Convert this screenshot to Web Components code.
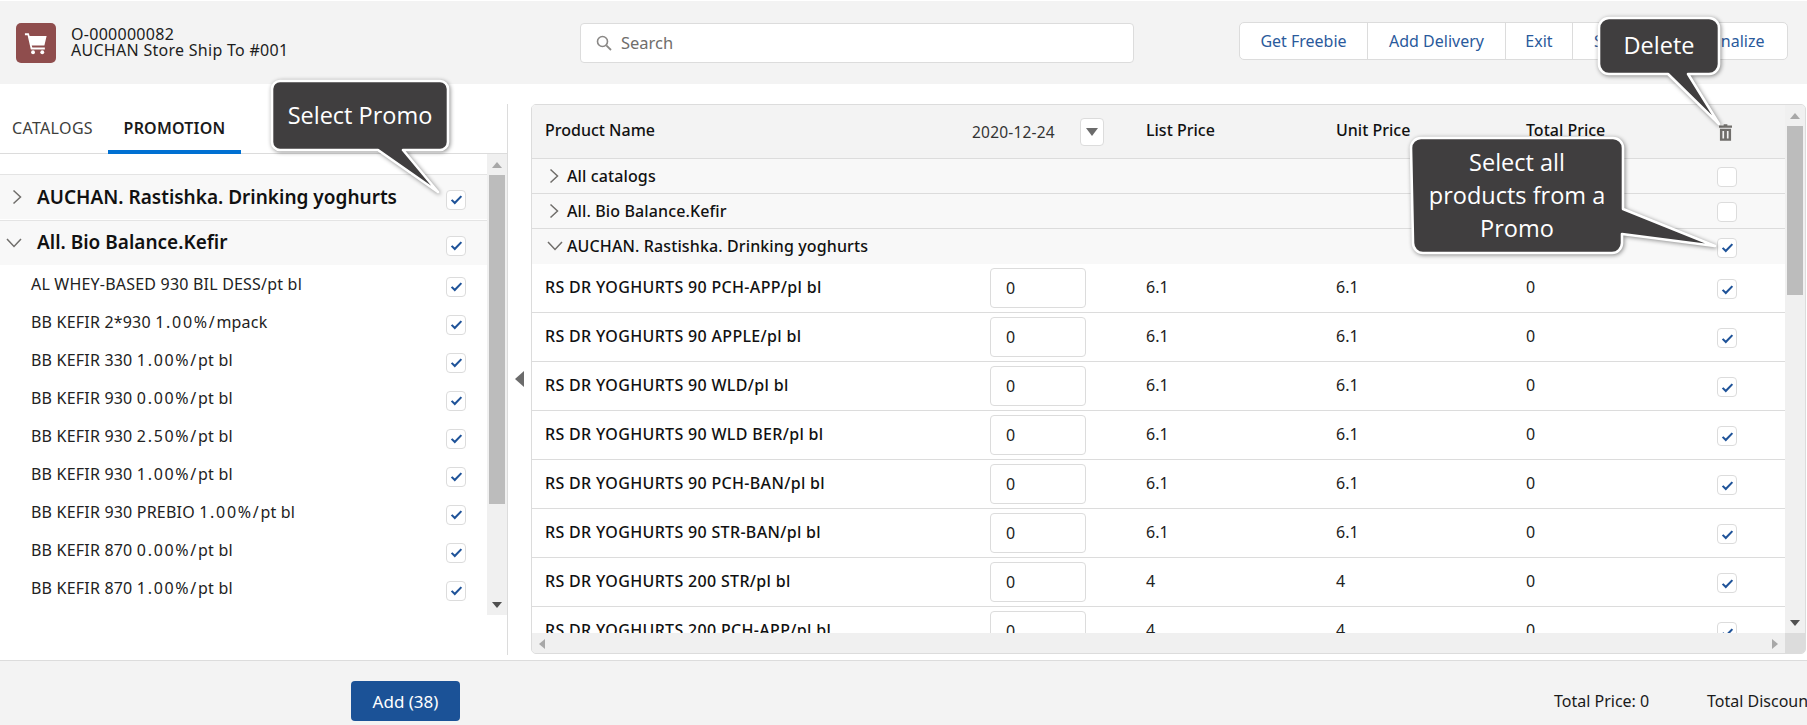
<!DOCTYPE html>
<html lang="en"><head><meta charset="utf-8"><title>Order</title>
<style>
html,body{margin:0;padding:0;background:#fff;overflow:hidden}
body{width:1807px;height:725px;font-family:"Noto Sans",sans-serif;color:#1a1a1a}
</style></head><body>
<order-app></order-app>
<script>
const def=(name,css,html,init)=>customElements.define(name,class extends HTMLElement{
  connectedCallback(){ if(this.shadowRoot) return; const r=this.attachShadow({mode:'open'});
    r.innerHTML=`<style>${css}</style>`+(typeof html==='function'?html(this):html); if(init) init(this,r);}
});
const CHECK=`<svg viewBox="0 0 20 20" width="15" height="15"><path d="M3.5 10.5l4.2 4.2L16.5 5.5" fill="none" stroke="#1f5399" stroke-width="2.8"/></svg>`;
const CHEV_R=`<svg width="11" height="16" viewBox="0 0 11 16"><path d="M1.5 1.5l7 6.5-7 6.5" fill="none" stroke="#706e6b" stroke-width="1.5"/></svg>`;
const CHEV_D=`<svg width="16" height="10" viewBox="0 0 16 10"><path d="M1 1l7 7.5L15 1" fill="none" stroke="#706e6b" stroke-width="1.5"/></svg>`;

def('x-check',`:host{display:inline-flex;box-sizing:border-box;width:20px;height:20px;background:#fff;border:1px solid #dcdcdc;border-radius:4px;align-items:center;justify-content:center}`,
  el=>el.hasAttribute('on')?CHECK:'');

def('fake-vbar',`:host{display:flex;flex-direction:column;align-items:center;background:#f0f0f0;box-sizing:border-box;width:20px}
 .t{height:21px;flex:none;display:flex;align-items:center;justify-content:center}
 .thumb{background:#bcbcbc;width:16px;flex:none}
 .sp{flex:1}
 .a{width:0;height:0;border:5px solid transparent;border-top:0;border-bottom:6px solid #a8a8a8}
 .b{width:0;height:0;border:5px solid transparent;border-bottom:0;border-top:6px solid #505050}`,
 el=>`<div class="t"><i class="a"></i></div><div class="thumb" style="height:${el.getAttribute('thumb')}px"></div><div class="sp"></div><div class="t"><i class="b"></i></div>`);

def('app-header',`:host{display:flex;box-sizing:border-box;height:83px;background:#f3f3f3;padding:22px 0 0 16px;align-items:flex-start}
 .logo{width:40px;height:40px;border-radius:5px;background:#8f4d4d;display:flex;align-items:center;justify-content:center;flex:none}
 .who{width:509px;margin-left:15px;font-size:16px;line-height:16px;padding-top:3px;flex:none;color:#1d1d1d;letter-spacing:.28px;white-space:nowrap}
 .search{box-sizing:border-box;width:554px;height:40px;background:#fff;border:1px solid #dcdcdc;border-radius:4px;display:flex;align-items:center;padding-left:15px;gap:9px;color:#706e6b;font-size:16.5px;flex:none}
 .search span{padding-bottom:2px}
 .btns{margin:-1px 0 0 105px;display:flex;height:38px;box-sizing:border-box;background:#fff;border:1px solid #dcdcdc;border-radius:5px;flex:none}
 .btns span{display:flex;align-items:center;justify-content:center;box-sizing:border-box;border-left:1px solid #dcdcdc;color:#2a5a9c;font-size:16px}
 .btns span:first-child{border-left:0}`,
 `<div class="logo"><svg width="24" height="24" viewBox="0 0 26 26" fill="#fff"><path d="M1 2.5h4.2l.9 3H24.5l-2.4 10.2H8.4l.6 2.3h13.6v2H7.4L3.9 4.5H1z"/><circle cx="9.8" cy="23" r="2.1"/><circle cx="19.8" cy="23" r="2.1"/></svg></div>
 <div class="who">O-000000082<br>AUCHAN Store Ship To #001</div>
 <div class="search"><svg width="16" height="16" viewBox="0 0 16 16"><circle cx="6.5" cy="6.5" r="5" fill="none" stroke="#8a8886" stroke-width="1.6"/><path d="M10.3 10.3L15 15" stroke="#8a8886" stroke-width="1.8"/></svg><span>Search</span></div>
 <div class="btns"><span style="width:127px">Get Freebie</span><span style="width:138px">Add Delivery</span><span style="width:67px">Exit</span><span style="width:113px;justify-content:flex-start;padding-left:21px">Save</span><span style="width:102px">Finalize</span></div>`);

def('tab-bar',`:host{display:flex;box-sizing:border-box;height:50px;border-bottom:1px solid #dcdcdc;font-size:16px;color:#3e3e3c}
 .c{width:108px;padding-left:12px;box-sizing:border-box;line-height:48px;letter-spacing:.35px}
 .p{width:133px;box-sizing:border-box;text-align:center;font-weight:600;color:#1a1a1a;line-height:48px;height:50px;border-bottom:4px solid #0070d2;letter-spacing:.2px}`,
 `<div class="c">CATALOGS</div><div class="p">PROMOTION</div>`);

def('promo-group',`:host{display:flex;align-items:center;box-sizing:border-box;height:45px;background:#f8f8f8;border-top:1px solid #e4e4e4;margin-bottom:1px;font-size:19px;font-weight:600;color:#111;position:relative}
 .ch{width:37px;padding-left:12px;box-sizing:border-box;display:flex;flex:none}
 :host([open]) .ch{padding-left:6px}
 .n{flex:1;white-space:nowrap}
 :host([open]) .n{padding-bottom:2px}
 x-check{margin-right:21px;margin-top:5px}`,
 el=>`<div class="ch">${el.hasAttribute('open')?CHEV_D:CHEV_R}</div><div class="n"><slot></slot></div><x-check on></x-check>`);

def('promo-item',`:host{display:flex;align-items:center;box-sizing:border-box;height:38px;padding-left:31px;font-size:16px;letter-spacing:.2px;color:#222}
 .n{flex:1;white-space:nowrap;padding-bottom:2px}
 x-check{margin-right:21px;margin-top:3px}`,
 `<div class="n"><slot></slot></div><x-check on></x-check>`);

def('promo-panel',`:host{display:flex;flex-direction:column;box-sizing:border-box;width:508px;margin-top:20px;height:551px;border-right:1px solid #dcdcdc;flex:none}
 .body{display:flex;height:461px}
 .list{width:487px;padding-top:20px;box-sizing:border-box;overflow:hidden;flex:none}
 .w{letter-spacing:1.7px}`,
 `<tab-bar></tab-bar><div class="body"><div class="list">
 <promo-group>AUCHAN. Rastishka. Drinking yoghurts</promo-group>
 <promo-group open>All. Bio Balance.Kefir</promo-group>
 ${['AL WHEY-BASED 930 BIL DESS/pt bl','BB KEFIR 2*930 1.00%/mpack','BB KEFIR 330 1.00%/pt bl','BB KEFIR 930 0.00%/pt bl','BB KEFIR 930 2.50%/pt bl','BB KEFIR 930 1.00%/pt bl','BB KEFIR 930 PREBIO 1.00%/pt bl','BB KEFIR 870 0.00%/pt bl','BB KEFIR 870 1.00%/pt bl'].map(t=>`<promo-item>${t.replace(/(\d\.\d\d%\/)/,'<span class="w">$1</span>')}</promo-item>`).join('')}
 </div><fake-vbar thumb="329"></fake-vbar></div>`);

const GRID='display:grid;grid-template-columns:458px 156px 190px 190px 191px 68px;align-items:center;';
def('table-head',`:host{${GRID}box-sizing:border-box;height:54px;background:#f3f3f3;border-bottom:1px solid #dcdcdc;font-size:16px;font-weight:500;color:#111;padding-bottom:3px}
 .n{padding-left:13px;display:flex;align-items:center;width:600px;box-sizing:border-box}
 .d{margin-left:auto;margin-right:28px;display:flex;align-items:center;justify-content:space-between;font-weight:400;font-size:15.5px;letter-spacing:.2px;color:#333;width:132px;box-sizing:border-box;margin-top:3px}
 .dd{width:24px;height:28px;background:#fff;border:1px solid #dcdcdc;border-radius:4px;box-sizing:border-box;display:flex;align-items:center;justify-content:center;flex:none}
 .dd i{border:6px solid transparent;border-bottom:0;border-top:8px solid #6b6b6b;width:0;height:0}
 .tr{display:flex;justify-content:center;width:17px;margin-top:5px}`,
 `<div class="n"><span>Product Name</span><span class="d"><span>2020-12-24</span><span class="dd"><i></i></span></span></div><div></div><div>List Price</div><div>Unit Price</div><div>Total Price</div>
 <div class="tr"><svg width="13" height="17" viewBox="0 0 14 18" fill="#706e6b"><path d="M5 0h4v1.5h5V4H0V1.5h5zM1 5h12v13H1zM3.7 7.5v8h1.8v-8zm4.8 0v8h1.8v-8z"/></svg></div>`);

def('table-group',`:host{${GRID}box-sizing:border-box;height:35px;background:#f8f8f8;border-bottom:1px solid #dcdcdc;font-size:16px;font-weight:500;color:#111;letter-spacing:.12px}
 :host([open]){border-bottom:0}
 .n{display:flex;align-items:center;padding-left:17px;white-space:nowrap;grid-column:1 / span 5;padding-bottom:1px}
 .ch{width:18px;flex:none;display:flex}
 :host([open]) .n{padding-left:15px}
 :host([open]) .ch{width:20px}
 x-check{margin-top:2px}`,
 el=>`<div class="n"><span class="ch">${el.hasAttribute('open')?CHEV_D:CHEV_R}</span><slot></slot></div><x-check ${el.hasAttribute('on')?'on':''}></x-check>`);

def('product-row',`:host{${GRID}box-sizing:border-box;height:49px;background:#fff;border-bottom:1px solid #dcdcdc;font-size:16px;color:#222}
 .n{padding-left:13px;font-weight:500;color:#111;white-space:nowrap;letter-spacing:.33px;padding-bottom:2px}
 .p{padding-bottom:2px}
 .i{box-sizing:border-box;width:96px;height:40px;border:1px solid #dcdcdc;border-radius:4px;padding-left:15px;display:flex;align-items:center}
 x-check{margin-top:2px}`,
 el=>`<div class="n"><slot></slot></div><div class="i">0</div><div class="p">${el.getAttribute('p')}</div><div class="p">${el.getAttribute('p')}</div><div class="p">0</div><x-check on></x-check>`);

def('product-table',`:host{display:grid;grid-template-columns:1253px 20px;grid-template-rows:528px 21px;box-sizing:border-box;width:1275px;height:550px;margin-top:20px;border:1px solid #dcdcdc;border-radius:5px;overflow:hidden;flex:none;background:#f0f0f0}
 .v{overflow:hidden;background:#fff}
 .h{display:flex;align-items:center;justify-content:space-between;padding:0 7px 0 7px;background:#f0f0f0}
 .l{border:5px solid transparent;border-left:0;border-right:6px solid #a8a8a8;width:0;height:0}
 .r{border:5px solid transparent;border-right:0;border-left:6px solid #a8a8a8;width:0;height:0}
 .c{background:#dcdcdc}`,
 `<div class="v"><table-head></table-head>
 <table-group>All catalogs</table-group><table-group>All. Bio Balance.Kefir</table-group><table-group open on>AUCHAN. Rastishka. Drinking yoghurts</table-group>
 ${[['90 PCH-APP','6.1'],['90 APPLE','6.1'],['90 WLD','6.1'],['90 WLD BER','6.1'],['90 PCH-BAN','6.1'],['90 STR-BAN','6.1'],['200 STR','4'],['200 PCH-APP','4']].map(([n,p])=>`<product-row p="${p}">RS DR YOGHURTS ${n}/pl bl</product-row>`).join('')}
 </div><fake-vbar thumb="169"></fake-vbar><div class="h"><i class="l"></i><i class="r"></i></div><div class="c"></div>`);

def('app-footer',`:host{display:flex;box-sizing:border-box;height:65px;background:#f3f3f3;border-top:1px solid #dcdcdc;font-size:16px;color:#1a1a1a;align-items:flex-start;padding-top:20px;white-space:nowrap;overflow:hidden}
 .add{margin-left:351px;width:109px;height:40px;background:#1b5297;color:#fff;border-radius:4px;display:flex;align-items:center;justify-content:center;flex:none;font-size:17px}
 .tp{margin-left:1094px;width:153px;flex:none;line-height:40px}
 .td{line-height:40px}`,
 `<div class="add">Add (38)</div><div class="tp">Total Price: 0</div><div class="td">Total Discount: 0</div>`);

def('call-out',`:host{position:absolute;display:flex;align-items:center;justify-content:center;text-align:center;color:#fff;font-family:"Open Sans",sans-serif;font-size:23.5px;line-height:33px;box-sizing:border-box;z-index:5}
 svg{position:absolute;left:0;top:0;overflow:visible;filter:drop-shadow(1px 1px 2px rgba(0,0,0,.45))}
 .t{position:relative;white-space:nowrap}`,
 el=>`<svg width="1" height="1"><path d="${el.getAttribute('d')}" fill="#403e3f" stroke="#fff" stroke-width="2.6" stroke-linejoin="round"/></svg><div class="t"><slot></slot></div>`);

def('order-app',`:host{display:block;position:relative;width:1807px;height:725px;padding-top:1px;box-sizing:border-box;overflow:hidden}
 .main{display:flex;height:576px}
 .mid{width:23px;display:flex;align-items:center;height:550px;margin-top:20px;flex:none;padding-left:7px;box-sizing:border-box}
 .mid i{border:6px solid transparent;border-left:0;border-right:9px solid #6b6b6b;border-top-width:8px;border-bottom-width:8px;width:0;height:0}`,
 `<app-header></app-header><div class="main"><promo-panel></promo-panel><div class="mid"><i></i></div><product-table></product-table></div><app-footer></app-footer>
 <call-out style="left:272px;top:81px;width:176px;height:69px" d="M8 0H168a8 8 0 0 1 8 8V61a8 8 0 0 1-8 8H131L166 111L106 69H8a8 8 0 0 1-8-8V8a8 8 0 0 1 8-8Z">Select Promo</call-out>
 <call-out style="left:1599px;top:18px;width:120px;height:56px;padding-bottom:2px" d="M10 0H110a10 10 0 0 1 10 10V46a10 10 0 0 1-10 10H89L120 106L69 56H10a10 10 0 0 1-10-10V10a10 10 0 0 1 10-10Z">Delete</call-out>
 <call-out style="left:1411px;top:138px;width:212px;height:115px" d="M10 0H202a10 10 0 0 1 10 10V71L304 108L211 96V105a10 10 0 0 1-10 10H12a10 10 0 0 1-10-10L0 10a10 10 0 0 1 10-10Z">Select all<br>products from a<br>Promo</call-out>`);
</script></body></html>
